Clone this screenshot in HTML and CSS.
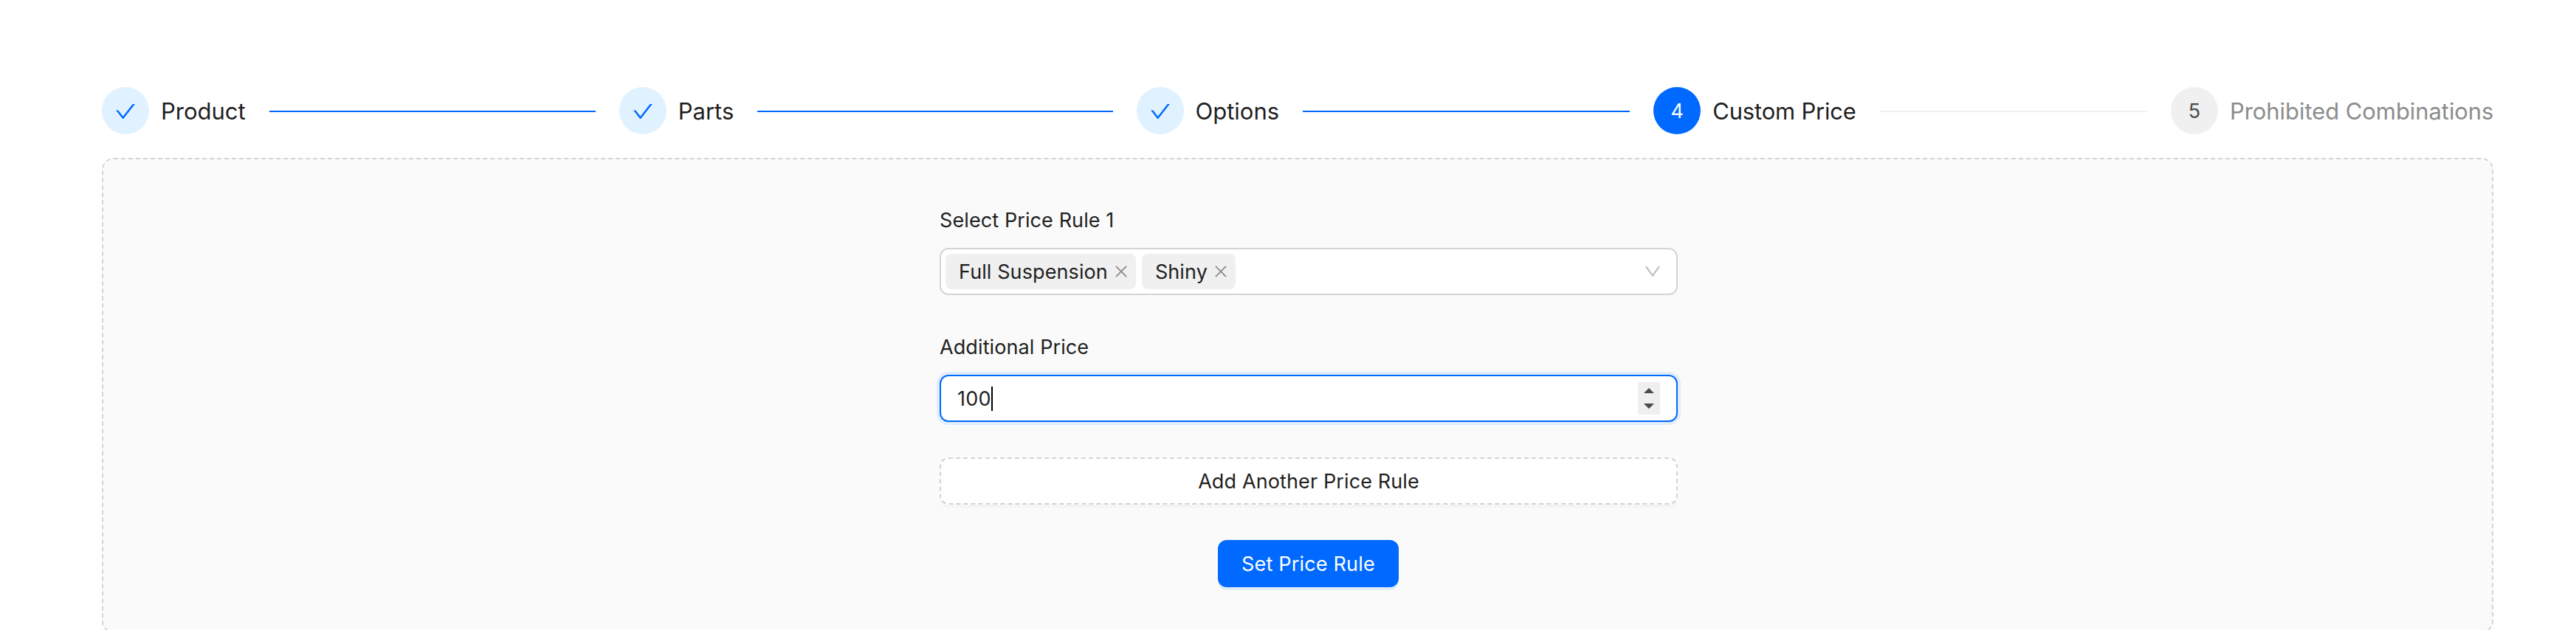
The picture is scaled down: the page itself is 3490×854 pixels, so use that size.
FILE: index.html
```html
<!DOCTYPE html>
<html lang="en">
<head>
<meta charset="utf-8">
<title>Custom Price</title>
<link rel="stylesheet" href="styles.css">
</head>
<body>
<svg class="sprite" aria-hidden="true">
  <symbol id="check" viewBox="64 64 896 896"><path d="M912 190h-69.9c-9.8 0-19.1 4.5-25.1 12.2L404.7 724.5 207 474a32 32 0 00-25.1-12.2H112c-6.7 0-10.4 7.7-6.3 12.9l273.9 347c12.8 16.2 37.4 16.2 50.3 0l488.4-618.9c4.1-5.1.4-12.8-6.3-12.8z"/></symbol>
  <symbol id="down" viewBox="64 64 896 896"><path d="M884 256h-75c-5.1 0-9.9 2.5-12.9 6.6L512 654.2 227.9 262.6c-3-4.1-7.8-6.6-12.9-6.6h-75c-6.5 0-10.3 7.4-6.5 12.7l352.6 486.1c12.8 17.6 39 17.6 51.7 0l352.6-486.1c3.9-5.3.1-12.7-6.4-12.7z"/></symbol>
  <symbol id="close" viewBox="64 64 896 896"><path d="M799.9 166.3l57.8 57.8L569.9 512l287.8 287.8-57.8 57.9L512 569.9 224.2 857.7l-57.9-57.9L454.1 512 166.3 224.2l57.9-57.9L512 454.1z"/></symbol>
</svg>
<main class="page">
  <ol class="steps">
    <li class="step"><span class="dot done"><svg class="check"><use href="#check"/></svg></span><span class="title">Product</span><i class="tail done"></i></li>
    <li class="step"><span class="dot done"><svg class="check"><use href="#check"/></svg></span><span class="title">Parts</span><i class="tail done"></i></li>
    <li class="step"><span class="dot done"><svg class="check"><use href="#check"/></svg></span><span class="title">Options</span><i class="tail done"></i></li>
    <li class="step"><span class="dot active"><span class="text">4</span></span><span class="title current">Custom Price</span><i class="tail"></i></li>
    <li class="step last"><span class="dot"><span class="text">5</span></span><span class="title">Prohibited Combinations</span></li>
  </ol>
  <section class="panel">
    <form class="form">
      <label class="label">Select Price Rule 1</label>
      <div class="select">
        <span class="tag"><span class="text">Full Suspension</span><svg class="close"><use href="#close"/></svg></span>
        <span class="tag"><span class="text">Shiny</span><svg class="close"><use href="#close"/></svg></span>
        <svg class="arrow"><use href="#down"/></svg>
      </div>
      <label class="label second">Additional Price</label>
      <div class="input"><span class="text value">100</span><i class="caret"></i>
        <svg class="spinner" viewBox="0 0 30 44"><path d="M8 15L15 8L22 15ZM8 29H22L15 36Z"/></svg>
      </div>
      <button type="button" class="button dashed"><span class="text">Add Another Price Rule</span></button>
      <button type="button" class="button primary"><span class="text">Set Price Rule</span></button>
    </form>
  </section>
</main>
</body>
</html>
```
FILE: styles.css
```css
* { box-sizing: border-box; }
body {
  margin: 0;
  height: 854px;
  overflow: hidden;
  background: #fff;
  color: #1f1f1f;
  font-family: Inter, "Liberation Sans", sans-serif;
  font-size: 27px;
  line-height: 44px;
}
.sprite { display: none; }
.page { padding: 118px 112px 0 138px; }
.steps {
  display: grid;
  grid-template-columns: repeat(4, 1fr) 437px;
  margin: 0;
  padding: 0;
  list-style: none;
}
.step { display: flex; align-items: center; height: 64px; }
.dot {
  display: flex;
  flex: none;
  align-items: center;
  justify-content: center;
  width: 64px;
  height: 64px;
  margin-right: 16px;
  border-radius: 50%;
  background: #f0f0f0;
  color: #4c4c4c;
}
.dot.done { background: #e0f2ff; }
.dot.active { background: #0069ff; color: #fff; }
.check { width: 28px; height: 28px; margin-top: 2px; fill: #0069ff; }
.text { display: block; padding-top: 2px; white-space: nowrap; }
.title { flex: none; padding-top: 2px; font-size: 31px; line-height: 62px; white-space: nowrap; }
.current { letter-spacing: -.2px; }
.last .title { color: #8c8c8c; letter-spacing: -.07px; }
.tail { flex: 1; height: 2px; margin: 2px 32px 0; background: #f0f0f0; }
.tail.done { background: #0069ff; }
.panel {
  height: 644px;
  margin-top: 32px;
  border: 2px dashed #d4d4d4;
  border-radius: 16px;
  background: #fafafa;
}
.form {
  display: flex;
  flex-direction: column;
  width: 1000px;
  margin-left: 1133px;
  padding-top: 60px;
  letter-spacing: .1px;
}
.label { height: 44px; padding-top: 1px; white-space: nowrap; }
.select {
  display: flex;
  align-items: center;
  gap: 8px;
  height: 64px;
  margin-top: 16px;
  padding: 0 20px 0 6px;
  border: 2px solid #d4d4d4;
  border-radius: 12px;
  background: #fff;
}
.tag {
  display: flex;
  align-items: center;
  gap: 8px;
  height: 48px;
  padding: 0 10px 0 18px;
  border-radius: 8px;
  background: #f0f0f0;
}
.close { width: 20px; height: 20px; fill: #8c8c8c; }
.arrow { width: 24px; height: 24px; margin-left: auto; fill: #bfbfbf; }
.second { margin-top: 48px; }
.input {
  display: flex;
  align-items: center;
  height: 64px;
  margin-top: 16px;
  padding: 0 22px;
  border: 2px solid #0069ff;
  border-radius: 12px;
  background: #fff;
  box-shadow: 0 0 0 4px #e0edfa;
}
.value { letter-spacing: .3px; }
.caret { width: 2px; height: 33px; background: #000; }
.spinner { width: 30px; height: 44px; margin-left: auto; background: #efefef; fill: #4a4a4a; }
.button {
  height: 64px;
  margin: 48px 0 0;
  padding: 0;
  border-radius: 12px;
  color: inherit;
  font: inherit;
  letter-spacing: .12px;
}
.dashed { border: 2px dashed #d4d4d4; background: #fff; box-shadow: 0 4px 0 rgba(0, 0, 0, .02); }
.primary {
  width: 245px;
  margin-left: 377px;
  border: 0;
  background: #0069ff;
  color: #fff;
  letter-spacing: .18px;
  box-shadow: 0 4px 0 #e0edfa;
}
```
